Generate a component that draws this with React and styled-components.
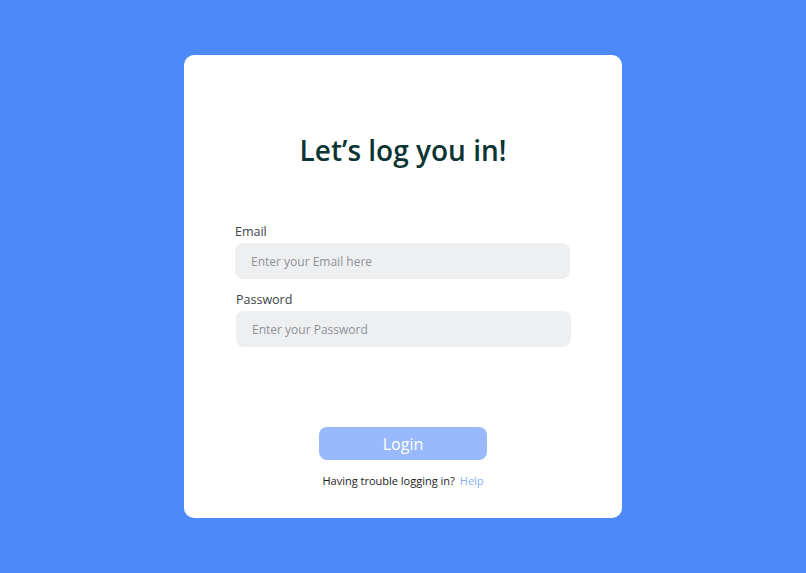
import styled, { createGlobalStyle } from 'styled-components';

const GlobalStyle = createGlobalStyle`
  html, body {
    margin: 0;
    padding: 0;
    background: #4d8af9;
  }
  body {
    font-family: 'Open Sans', 'Liberation Sans', sans-serif;
  }
`;

const Page = styled.div`
  width: 806px;
  height: 573px;
  display: flex;
  justify-content: center;
  padding-top: 55px;
  box-sizing: border-box;
  background: #4d8af9;
`;

const Card = styled.div`
  width: 438px;
  height: 463px;
  background: #ffffff;
  border-radius: 10px;
  display: flex;
  flex-direction: column;
  align-items: center;
  box-sizing: border-box;
  padding-top: 81px;
`;

const Title = styled.h1`
  margin: 0;
  font-size: 28px;
  font-weight: 600;
  color: #0c3433;
  line-height: 28px;
`;

const Form = styled.div`
  width: 336px;
  display: flex;
  flex-direction: column;
  margin-top: 60px;
`;

const Label = styled.label`
  font-size: 12.5px;
  font-weight: 500;
  color: #3c4346;
  margin: 0 0 3px ${p => p.$shift || 0}px;
  line-height: 16px;
`;

const Input = styled.input`
  width: 335px;
  height: 36px;
  border: none;
  outline: none;
  border-radius: 8px;
  background: #eeeff1;
  padding: 0 16px;
  box-sizing: border-box;
  font-family: inherit;
  font-size: 12px;
  color: #333;
  margin-left: ${p => p.$shift || 0}px;
  margin-bottom: ${p => p.$gap || 0}px;

  &::placeholder {
    color: #8e9295;
  }
`;

const Button = styled.button`
  margin-top: 80px;
  width: 168px;
  height: 33px;
  border: none;
  border-radius: 8px;
  background: #98b9fc;
  color: #ffffff;
  font-family: inherit;
  font-size: 16px;
  font-weight: 500;
  cursor: pointer;
`;

const Footer = styled.p`
  margin: 13px 0 0;
  font-size: 11px;
  line-height: 16px;
  color: #1b1b1b;
`;

const HelpLink = styled.a`
  color: #8aaef5;
  text-decoration: none;
  margin-left: 5px;
`;

const App = () => (
  <>
    <GlobalStyle />
    <Page>
      <Card>
        <Title>Let’s log you in!</Title>
        <Form>
          <Label>Email</Label>
          <Input type="email" placeholder="Enter your Email here" $gap={13} />
          <Label $shift={1}>Password</Label>
          <Input type="password" placeholder="Enter your Password" $shift={1} />
        </Form>
        <Button>Login</Button>
        <Footer>
          Having trouble logging in?
          <HelpLink href="#">Help</HelpLink>
        </Footer>
      </Card>
    </Page>
  </>
);

export default App;
